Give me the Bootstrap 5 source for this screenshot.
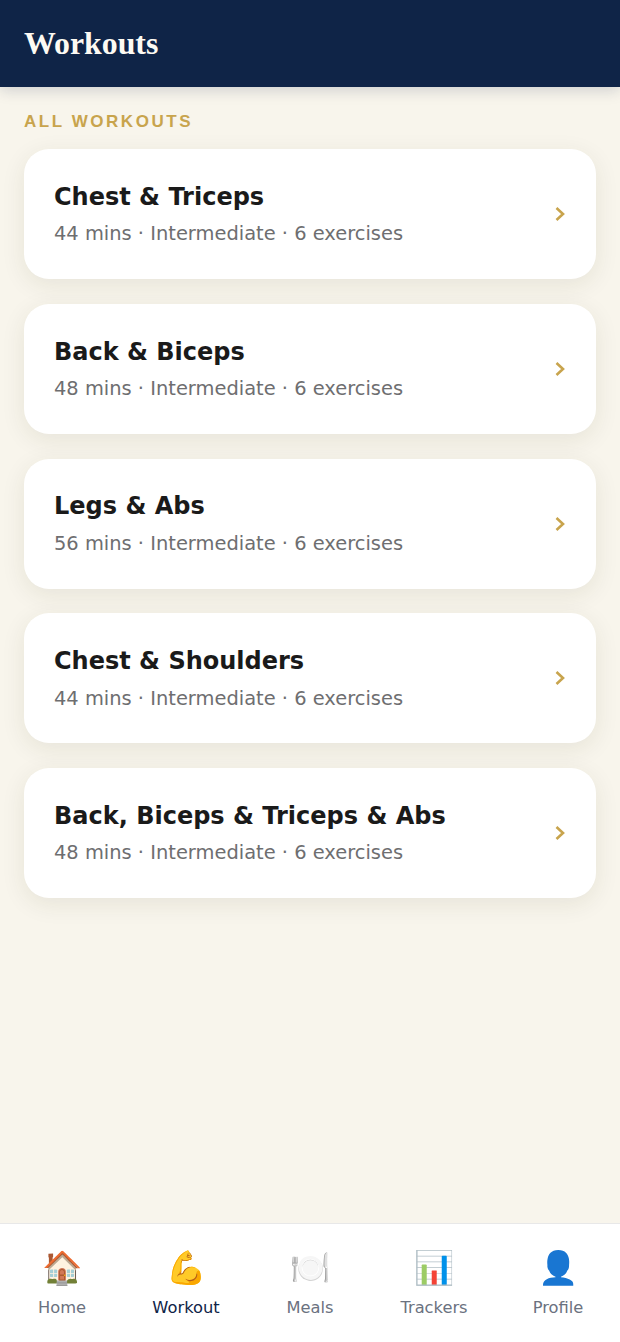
<!DOCTYPE html>
<html lang="en">
<head>
    <meta charset="UTF-8">
    <meta name="viewport" content="width=device-width, initial-scale=1.0">
    <title>Workouts</title>
    <link href="https://cdn.jsdelivr.net/npm/bootstrap@5.3.0/dist/css/bootstrap.min.css" rel="stylesheet">
    <style>
        html, body { height: 100%; }
        body { background: #f8f5ec; font-family: "DejaVu Sans", sans-serif; }
        .app-shell { height: 100vh; }
        .app-header { background: #0f2447; height: 87px; padding: 1px 24px 0; box-shadow: 0 3px 14px rgba(15, 36, 71, .18); }
        .app-title { font-family: "Liberation Serif", serif; font-weight: 700; font-size: 31.8px; color: #fdfaf3; margin: 0; }
        .section-label { font-family: "Liberation Sans", sans-serif; font-weight: 700; font-size: 17px; letter-spacing: 2.55px; color: #c8a44d; margin: 25px 0 17px; line-height: 20px; }
        .workout-list { padding: 0 24px; gap: 24.8px; }
        .workout-item { background: #fff; border-radius: 25px; height: 130px; padding: 0 30px; box-shadow: 0 6px 24px rgba(60, 60, 20, .09); }
        .workout-name { font-weight: 700; font-size: 24px; line-height: 30px; color: #1a1a1a; margin: 0 0 10.5px; }
        .workout-meta { font-size: 19.45px; line-height: 24px; color: #6e6e70; margin: 0; }
        .bottom-nav { background: #fff; border-top: 1px solid #e8e8e8; height: 119px; padding-top: 22px; }
        .nav-slot { width: 20%; }
        .nav-emoji { font-size: 32.5px; line-height: 44px; height: 44px; }
        .nav-text { font-size: 16.3px; line-height: 22px; color: #6b7280; margin-top: 7px; }
        .nav-text.is-active { color: #0f2447; }
    </style>
</head>
<body>
<div class="app-shell d-flex flex-column">
    <header class="app-header d-flex align-items-center">
        <h1 class="app-title">Workouts</h1>
    </header>

    <main class="flex-grow-1">
        <div class="section-label px-4">ALL WORKOUTS</div>
        <div class="workout-list d-flex flex-column">
            <div class="workout-item d-flex align-items-center justify-content-between">
                <div><h2 class="workout-name">Chest &amp; Triceps</h2><p class="workout-meta">44 mins · Intermediate · 6 exercises</p></div>
                <svg width="12" height="16" viewBox="0 0 12 16"><path d="M2.5 2l6.5 6-6.5 6" fill="none" stroke="#c8a44d" stroke-width="2.6"/></svg>
            </div>
            <div class="workout-item d-flex align-items-center justify-content-between">
                <div><h2 class="workout-name">Back &amp; Biceps</h2><p class="workout-meta">48 mins · Intermediate · 6 exercises</p></div>
                <svg width="12" height="16" viewBox="0 0 12 16"><path d="M2.5 2l6.5 6-6.5 6" fill="none" stroke="#c8a44d" stroke-width="2.6"/></svg>
            </div>
            <div class="workout-item d-flex align-items-center justify-content-between">
                <div><h2 class="workout-name">Legs &amp; Abs</h2><p class="workout-meta">56 mins · Intermediate · 6 exercises</p></div>
                <svg width="12" height="16" viewBox="0 0 12 16"><path d="M2.5 2l6.5 6-6.5 6" fill="none" stroke="#c8a44d" stroke-width="2.6"/></svg>
            </div>
            <div class="workout-item d-flex align-items-center justify-content-between">
                <div><h2 class="workout-name">Chest &amp; Shoulders</h2><p class="workout-meta">44 mins · Intermediate · 6 exercises</p></div>
                <svg width="12" height="16" viewBox="0 0 12 16"><path d="M2.5 2l6.5 6-6.5 6" fill="none" stroke="#c8a44d" stroke-width="2.6"/></svg>
            </div>
            <div class="workout-item d-flex align-items-center justify-content-between">
                <div><h2 class="workout-name">Back, Biceps &amp; Triceps &amp; Abs</h2><p class="workout-meta">48 mins · Intermediate · 6 exercises</p></div>
                <svg width="12" height="16" viewBox="0 0 12 16"><path d="M2.5 2l6.5 6-6.5 6" fill="none" stroke="#c8a44d" stroke-width="2.6"/></svg>
            </div>
        </div>
    </main>

    <nav class="bottom-nav d-flex">
        <div class="nav-slot text-center"><div class="nav-emoji">🏠</div><div class="nav-text">Home</div></div>
        <div class="nav-slot text-center"><div class="nav-emoji">💪</div><div class="nav-text is-active">Workout</div></div>
        <div class="nav-slot text-center"><div class="nav-emoji">🍽️</div><div class="nav-text">Meals</div></div>
        <div class="nav-slot text-center"><div class="nav-emoji">📊</div><div class="nav-text">Trackers</div></div>
        <div class="nav-slot text-center"><div class="nav-emoji">👤</div><div class="nav-text">Profile</div></div>
    </nav>
</div>
<script src="https://cdn.jsdelivr.net/npm/bootstrap@5.3.0/dist/js/bootstrap.bundle.min.js"></script>
</body>
</html>
